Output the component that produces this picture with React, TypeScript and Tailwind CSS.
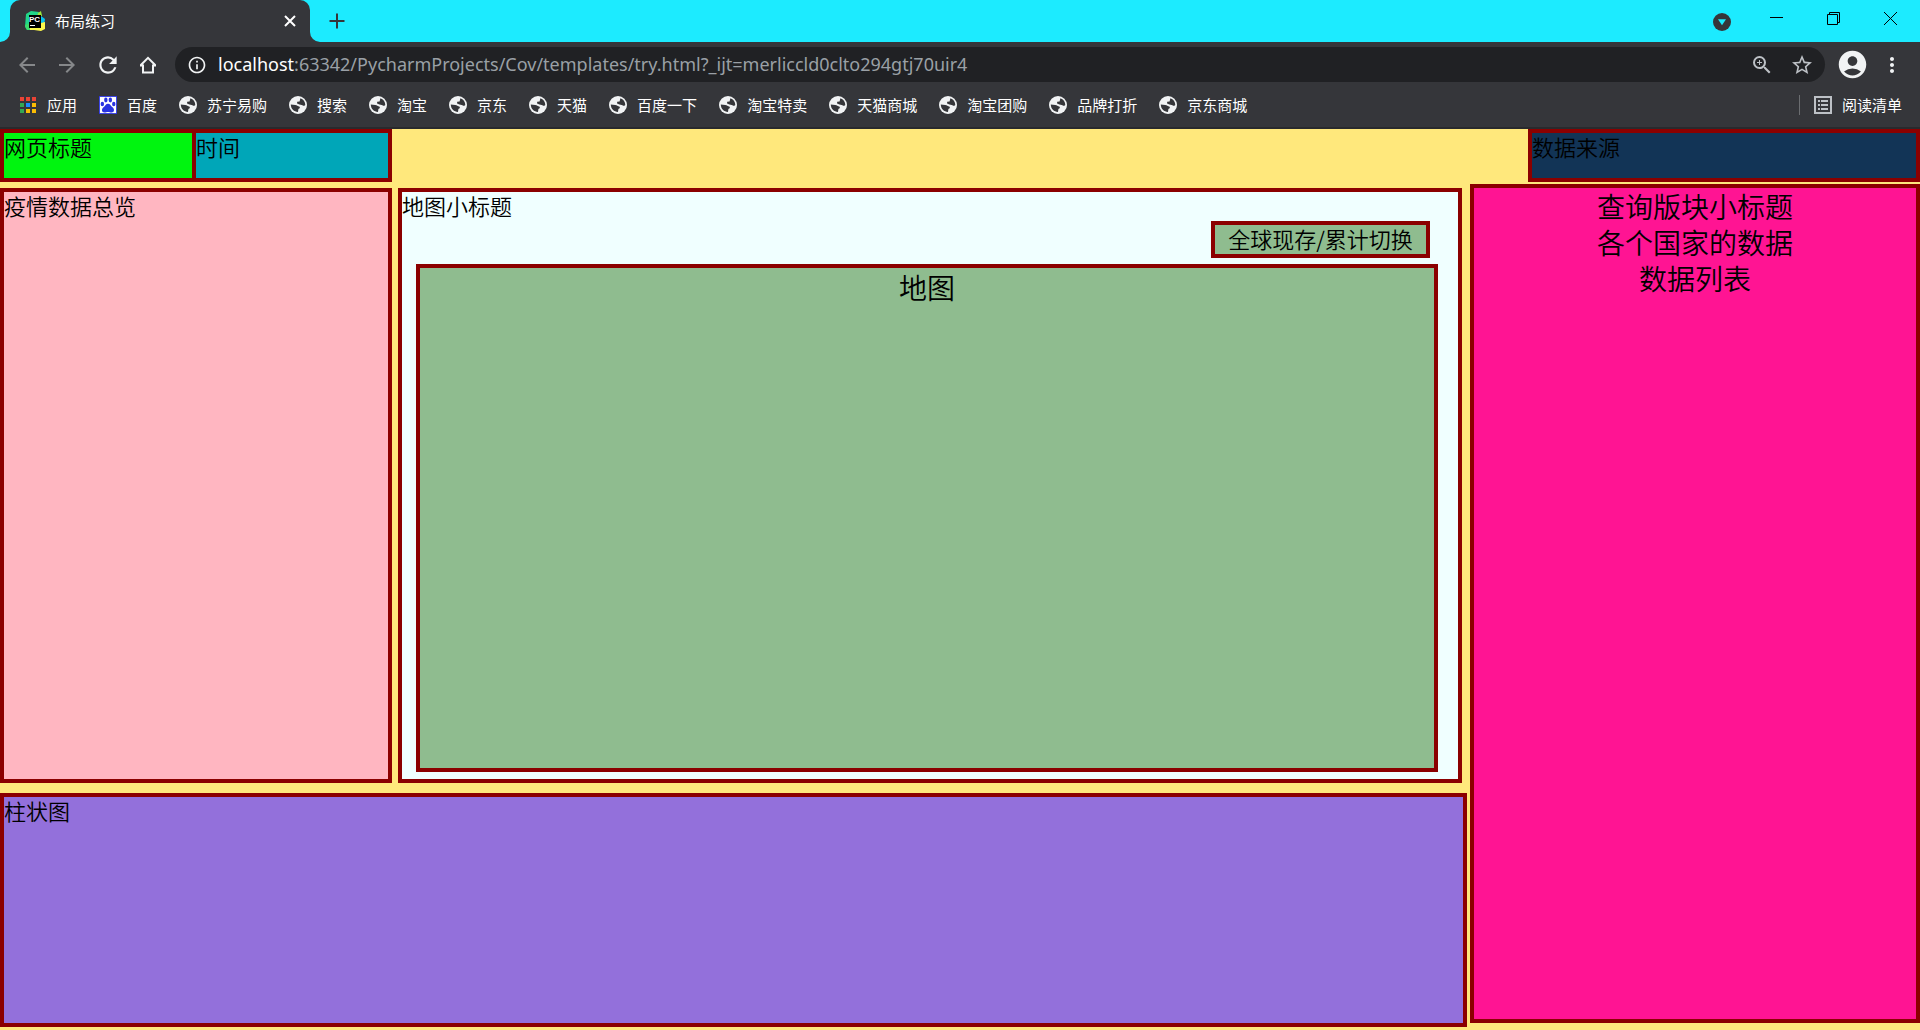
import React from 'react';
import {
  MdAccountCircle,
  MdArrowBack,
  MdArrowForward,
  MdInfoOutline,
  MdMoreVert,
  MdRefresh,
  MdStarBorder,
  MdZoomIn,
} from 'react-icons/md';

const bookmarks = [
  '苏宁易购',
  '搜索',
  '淘宝',
  '京东',
  '天猫',
  '百度一下',
  '淘宝特卖',
  '天猫商城',
  '淘宝团购',
  '品牌打折',
  '京东商城',
];

function PycharmIcon() {
  return (
    <svg width="20" height="20" viewBox="0 0 20 20" aria-hidden="true">
      <path d="M1 3 L6 0 L14 1 L11 9 L2 19 L0 16 Z" fill="#21d789" />
      <path d="M13 2 L16 0 L17 5 L12 6 Z" fill="#9be83c" />
      <path d="M16 5 L20 8 L19 15 L14 16 Z" fill="#07c3f2" />
      <path d="M2 19 L7 14 L16 12 L20 11 L20 18 L16 20 L9 19 Z" fill="#fcf84a" />
      <path d="M0 14 L5 12 L5 19 L2 19 Z" fill="#3ddc6b" />
      <rect x="4" y="4" width="12" height="13" fill="#000" />
      <text x="4" y="11" fontSize="8" fontWeight="700" fontFamily="Liberation Sans, sans-serif" fill="#fff">
        PC
      </text>
      <rect x="5" y="14" width="5" height="1" fill="#fff" />
    </svg>
  );
}

function HomeIcon() {
  return (
    <svg width="24" height="24" viewBox="0 0 24 24" fill="none" stroke="currentColor" strokeWidth="2" aria-hidden="true">
      <path d="M4.6 12.2 L12 4.8 L19.4 12.2 M4 12.6 H7 V19.5 H17 V12.6 H20" />
    </svg>
  );
}

function AppsIcon() {
  const colors = ['#ea4335', '#ea4335', '#ea4335', '#34a853', '#1a8cff', '#fbbc04', '#34a853', '#fbbc04', '#fbbc04'];
  return (
    <svg width="18" height="18" viewBox="0 0 18 18" aria-hidden="true">
      {colors.map((color, i) => (
        <rect key={i} x={1 + (i % 3) * 6} y={1 + Math.floor(i / 3) * 6} width="4" height="4" fill={color} />
      ))}
    </svg>
  );
}

function BaiduIcon() {
  return (
    <svg width="18" height="18" viewBox="0 0 20 20" aria-hidden="true">
      <rect width="20" height="20" fill="#2932e1" />
      <rect x="1" y="1" width="18" height="18" fill="#fff" />
      <g fill="#2932e1">
        <ellipse cx="3.7" cy="9" rx="1.9" ry="2.5" />
        <ellipse cx="7.6" cy="4.4" rx="1.9" ry="2.7" />
        <ellipse cx="12.6" cy="4.4" rx="1.9" ry="2.7" />
        <ellipse cx="16.4" cy="9" rx="1.9" ry="2.5" />
        <path d="M10 8.6 C12.4 8.6 13 11 15 12.6 C17.8 15 16.8 18.4 14 18.4 C12.4 18.4 11.6 17.9 10 17.9 C8.4 17.9 7.6 18.4 6 18.4 C3.2 18.4 2.2 15 5 12.6 C7 11 7.6 8.6 10 8.6 Z" />
      </g>
    </svg>
  );
}

function GlobeIcon() {
  return (
    <svg width="18" height="18" viewBox="0 0 18 18" aria-hidden="true">
      <circle cx="9" cy="9" r="9" fill="#f1f3f4" />
      <path
        d="M11.4 2.2 C14.4 3.2 16.3 5.8 16.3 8.9 L15.4 9.8 C14 10.2 13.4 8.8 11.6 8.7 C10 8.6 9.4 7.6 8 7.4 L8.2 5.8 L10.6 5.4 Z"
        fill="#35363a"
      />
      <path
        d="M1.8 8.6 L6.2 9 C8.2 9.2 8.6 10.4 10.4 10.6 L11 12 L9.4 13 L9 16 C5 16 1.8 13 1.8 8.6 Z"
        fill="#35363a"
      />
    </svg>
  );
}

function ReadingListIcon() {
  return (
    <svg width="18" height="18" viewBox="0 0 18 18" fill="#bdc1c6" aria-hidden="true">
      <path fillRule="evenodd" d="M0 0 H18 V18 H0 Z M2 2 V16 H16 V2 Z" />
      <path d="M4 4 H6 V6 H4 Z M4 8 H6 V10 H4 Z M4 12 H6 V14 H4 Z M7 4 H14 V6 H7 Z M7 8 H14 V10 H7 Z M7 12 H14 V14 H7 Z" />
    </svg>
  );
}

function TabStrip() {
  return (
    <div className="flex h-[42px] items-end bg-[#1cebff]">
      <svg width="10" height="10" viewBox="0 0 10 10" aria-hidden="true">
        <path d="M0 10 A10 10 0 0 0 10 0 V10 Z" fill="#35363a" />
      </svg>
      <div className="flex h-full w-[300px] items-center rounded-t-[10px] bg-[#35363a] pr-3 pl-[15px] text-white">
        <PycharmIcon />
        <span className="ml-[10px] flex-1 text-[15px]">布局练习</span>
        <button aria-label="关闭标签页" className="flex size-4 items-center justify-center">
          <svg width="12" height="12" viewBox="0 0 12 12" stroke="currentColor" strokeWidth="2">
            <path d="M1 1 L11 11 M11 1 L1 11" />
          </svg>
        </button>
      </div>
      <svg width="10" height="10" viewBox="0 0 10 10" aria-hidden="true">
        <path d="M10 10 A10 10 0 0 1 0 0 V10 Z" fill="#35363a" />
      </svg>
      <button aria-label="新标签页" className="flex h-full w-[34px] items-center justify-center text-[#35363a]">
        <svg width="16" height="16" viewBox="0 0 16 16" stroke="currentColor" strokeWidth="2">
          <path d="M8 0.5 V15.5 M0.5 8 H15.5" />
        </svg>
      </button>
      <div className="ml-auto flex h-full items-start text-black">
        <button aria-label="搜索标签页" className="mt-3 mr-4 p-px">
          <svg width="18" height="18" viewBox="0 0 18 18">
            <circle cx="9" cy="9" r="9" fill="#35363a" />
            <path d="M5 6.3 H13 L9 12.3 Z" fill="#1cebff" />
          </svg>
        </button>
        <div className="flex pr-px">
          <button aria-label="最小化" className="flex h-[37px] w-[57px] items-center justify-center">
            <svg width="13" height="13" viewBox="0 0 13 13" stroke="currentColor">
              <path d="M0 5.5 H13" />
            </svg>
          </button>
          <button aria-label="还原" className="flex h-[37px] w-[57px] items-center justify-center">
            <svg width="13" height="13" viewBox="0 0 13 13" stroke="currentColor" fill="none">
              <path d="M0.5 2.5 H10.5 V12.5 H0.5 Z M2.5 2.5 V0.5 H12.5 V10.5 H10.5" />
            </svg>
          </button>
          <button aria-label="关闭" className="flex h-[37px] w-[57px] items-center justify-center">
            <svg width="13" height="13" viewBox="0 0 13 13" stroke="currentColor">
              <path d="M0 0 L13 13 M13 0 L0 13" />
            </svg>
          </button>
        </div>
      </div>
    </div>
  );
}

function Toolbar() {
  return (
    <div className="flex h-[45px] items-center bg-[#35363a] pl-[15px] text-[#f1f3f4]">
      <div className="flex gap-4">
        <button aria-label="后退" className="text-[#86888a]">
          <MdArrowBack size={24} />
        </button>
        <button aria-label="前进" className="text-[#86888a]">
          <MdArrowForward size={24} />
        </button>
        <button aria-label="重新加载">
          <MdRefresh size={26} />
        </button>
        <button aria-label="主页" className="-ml-px">
          <HomeIcon />
        </button>
      </div>
      <div className="ml-[15px] flex h-[35px] flex-1 items-center rounded-full bg-[#202124] pr-[11px] pl-3">
        <MdInfoOutline size={20} />
        <div className="ml-[11px] flex-1 font-['Noto_Sans',sans-serif] text-[18px] text-[#9aa0a6]">
          <span className="text-white">localhost</span>
          :63342/PycharmProjects/Cov/templates/try.html?_ijt=merliccld0clto294gtj70uir4
        </div>
        <div className="flex gap-4 text-[#bdc1c6]">
          <button aria-label="缩放">
            <MdZoomIn size={24} />
          </button>
          <button aria-label="收藏">
            <MdStarBorder size={24} />
          </button>
        </div>
      </div>
      <button aria-label="个人资料" className="ml-[11px]">
        <MdAccountCircle size={33} />
      </button>
      <button aria-label="更多" className="mr-4 ml-[11px]">
        <MdMoreVert size={24} />
      </button>
    </div>
  );
}

function Bookmark({ icon, label }: { icon: React.ReactNode; label: string }) {
  return (
    <a href="#" className="flex items-center gap-[10px] whitespace-nowrap">
      {icon}
      {label}
    </a>
  );
}

function BookmarkBar() {
  return (
    <nav className="flex h-[42px] items-center gap-[22px] border-b-2 border-[#292a2d] bg-[#35363a] pr-[18px] pb-1 pl-[19px] text-[15px] text-white">
      <Bookmark icon={<AppsIcon />} label="应用" />
      <Bookmark icon={<BaiduIcon />} label="百度" />
      {bookmarks.map((name) => (
        <Bookmark key={name} icon={<GlobeIcon />} label={name} />
      ))}
      <div className="ml-auto flex items-center gap-[14px]">
        <span className="h-5 w-px bg-[#6b6d70]" />
        <Bookmark icon={<ReadingListIcon />} label="阅读清单" />
      </div>
    </nav>
  );
}

export default function App() {
  return (
    <div className="flex min-h-screen flex-col bg-[#ffe87c] font-['Noto_Sans_CJK_SC',sans-serif]">
      <TabStrip />
      <Toolbar />
      <BookmarkBar />

      <div className="flex flex-1 flex-col text-[22px] leading-[27px] font-[350] text-black">
        <header className="flex h-[53px] justify-between">
          <div className="flex w-[392px]">
            <div className="w-1/2 border-4 border-[#8b0000] bg-[#00f50f]">网页标题</div>
            <div className="w-1/2 border-4 border-l-0 border-[#8b0000] bg-[#00a6b8]">时间</div>
          </div>
          <div className="w-[392px] border-4 border-[#8b0000] bg-[#123456]">数据来源</div>
        </header>

        <div className="flex flex-1 gap-[3px]">
          <div className="flex flex-1 flex-col gap-[10px] pt-[6px] pb-[3px]">
            <div className="flex flex-1 gap-[6px] pr-[5px]">
              <section className="w-[392px] border-4 border-[#8b0000] bg-[#ffb6c1]">疫情数据总览</section>
              <section className="flex flex-1 flex-col border-4 border-[#8b0000] bg-[#f0ffff] pr-5 pb-[7px] pl-[14px]">
                <h2 className="-ml-[14px] h-[29px]">地图小标题</h2>
                <button className="mr-2 h-[37px] w-[219px] self-end border-4 border-[#8b0000] bg-[#8fbc8f] pb-[2px]">
                  全球现存/累计切换
                </button>
                <div className="mt-[6px] flex-1 border-4 border-[#8b0000] bg-[#8fbc8f] text-center text-[28px] leading-[38px]">
                  地图
                </div>
              </section>
            </div>
            <section className="h-[234px] border-4 border-[#8b0000] bg-[#9370db]">柱状图</section>
          </div>
          <aside className="mt-[2px] mb-[7px] w-[450px] border-4 border-[#8b0000] bg-[#ff1493] text-center text-[28px] leading-9">
            <p>查询版块小标题</p>
            <p>各个国家的数据</p>
            <p>数据列表</p>
          </aside>
        </div>
      </div>
    </div>
  );
}
